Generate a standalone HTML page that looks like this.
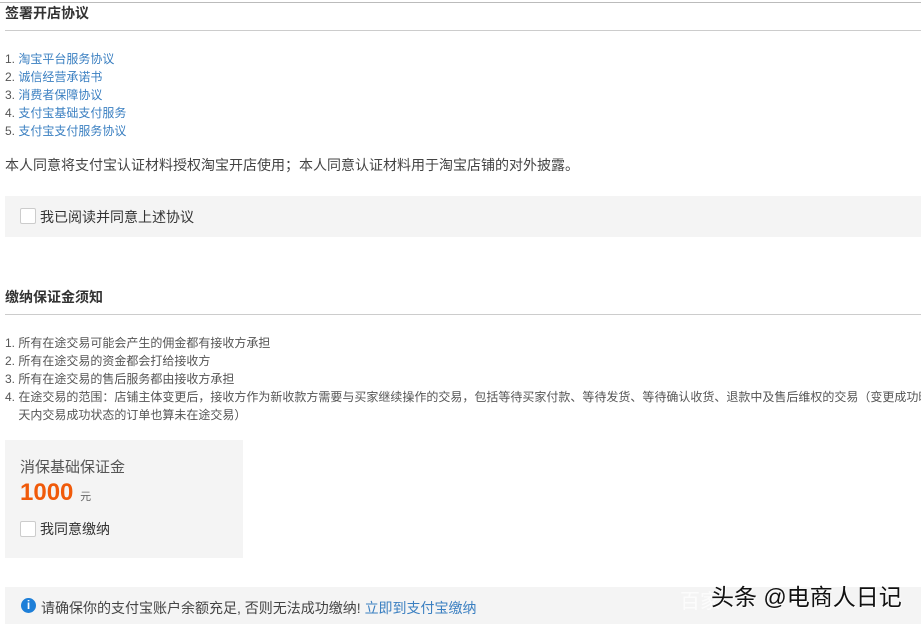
<!DOCTYPE html>
<html><head><meta charset="utf-8"><style>
body{margin:0;width:921px;height:624px;overflow:hidden;background:#fff;font-family:"Liberation Sans","Noto Sans CJK SC",sans-serif;color:#333;position:relative}
.a{position:absolute;white-space:nowrap}
.t{font-size:14px;font-weight:bold;color:#333}
.hr{position:absolute;left:5px;right:0;height:1px;background:#ccc}
.l{font-size:12px;line-height:18px;color:#555}
.l a{color:#3a7fc1;text-decoration:none}
.cb{position:absolute;width:14px;height:14px;border:1px solid #ccc;background:#fff;border-radius:2px}
</style></head><body>
<div class="hr" style="top:2px;left:0;background:#bbb"></div>
<div class="a t" style="left:5px;top:3px">签署开店协议</div>
<div class="hr" style="top:30px"></div>
<div class="a l" style="left:5px;top:50px">1. <a>淘宝平台服务协议</a><br>2. <a>诚信经营承诺书</a><br>3. <a>消费者保障协议</a><br>4. <a>支付宝基础支付服务</a><br>5. <a>支付宝支付服务协议</a></div>
<div class="a" style="left:5px;top:155px;font-size:14px;color:#444">本人同意将支付宝认证材料授权淘宝开店使用；本人同意认证材料用于淘宝店铺的对外披露。</div>
<div class="a" style="left:5px;top:196px;width:916px;height:41px;background:#f4f4f4"></div>
<div class="cb" style="left:20px;top:208px"></div>
<div class="a" style="left:40px;top:207px;font-size:14px">我已阅读并同意上述协议</div>
<div class="a t" style="left:5px;top:287px">缴纳保证金须知</div>
<div class="hr" style="top:314px"></div>
<div class="a l" style="left:5px;top:334px">1. 所有在途交易可能会产生的佣金都有接收方承担<br>2. 所有在途交易的资金都会打给接收方<br>3. 所有在途交易的售后服务都由接收方承担<br>4. 在途交易的范围：店铺主体变更后，接收方作为新收款方需要与买家继续操作的交易，包括等待买家付款、等待发货、等待确认收货、退款中及售后维权的交易（变更成功时<br>&nbsp;&nbsp;&nbsp;&nbsp;天内交易成功状态的订单也算未在途交易）</div>
<div class="a" style="left:5px;top:440px;width:238px;height:118px;background:#f4f4f4"></div>
<div class="a" style="left:20px;top:456px;font-size:15px;color:#555">消保基础保证金</div>
<div class="a" style="left:20px;top:479px;font-size:24px;font-weight:bold;color:#f05a0a">1000 <span style="font-size:11px;font-weight:normal;color:#666">元</span></div>
<div class="cb" style="left:20px;top:521px"></div>
<div class="a" style="left:40px;top:519px;font-size:14px">我同意缴纳</div>
<div class="a" style="left:5px;top:587px;width:916px;height:37px;background:#f4f4f4"></div>
<div class="a" style="left:21px;top:598px;width:15px;height:15px;border-radius:50%;background:#1e7fd8;color:#fff;font-size:12px;font-weight:bold;text-align:center;line-height:15px">i</div>
<div class="a" style="left:41px;top:598px;font-size:14px;color:#444">请确保你的支付宝账户余额充足, 否则无法成功缴纳! <span style="color:#3a7fc1">立即到支付宝缴纳</span></div>
<div class="a" style="left:680px;top:585px;font-size:20px;color:#fff;opacity:.8">百家</div>
<div class="a" style="left:711px;top:578px;font-size:23px;color:#111;text-shadow:1px 1px 1px #fff">头条 @电商人日记</div>
</body></html>
